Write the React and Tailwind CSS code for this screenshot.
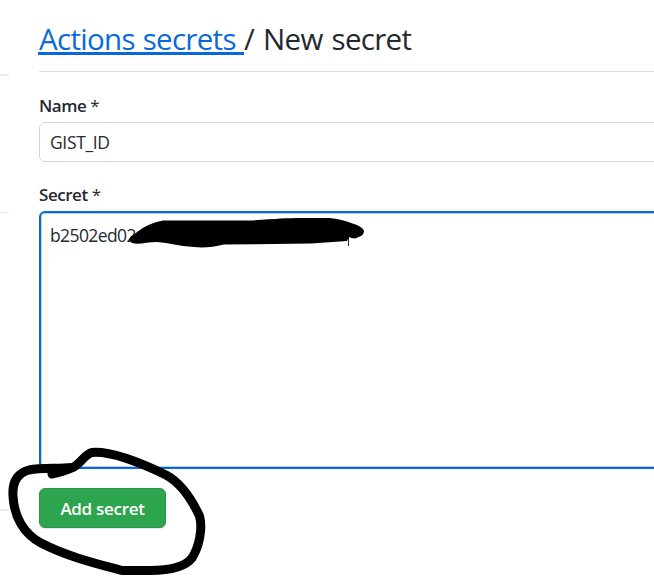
function Sidebar() {
  return (
    <aside className="flex w-[9px] shrink-0 flex-col">
      <div className="mt-[74px] h-[2px] bg-[#e9ecef]" />
      <div className="mt-[136px] h-px bg-[#e4e8ec]" />
      <div className="mt-[296px] h-[2px] bg-[#e9ecef]" />
    </aside>
  );
}

function Label({ children }) {
  return (
    <label className="block h-6 whitespace-pre text-[17px] leading-6 font-semibold tracking-[-0.45px] text-[#24292f]">
      {children} <span className="font-normal">*</span>
    </label>
  );
}

function Annotations() {
  return (
    <svg className="pointer-events-none absolute inset-0" width="654" height="576" viewBox="0 0 654 576">
      <path
        d="M129.500 239C130 236 134 235 137 232C145 226 151 223 163 220.5H250C275 219 286 218 302 218H329C342 219 352 223 359 226C364 229 365 231 363 234C362 237 358 236 357 238C354 239 351 238 349 237L347 241L311 243.5L224 244.5C213 247 204 248 194 247C178 246 170 243 157 242C147 242 139 245 132 243Q129 241 129.500 239Z"
        fill="#000"
      />
      <path
        d="M52 474C58 473 65 471 73 467.500C81 463 85 454 92 452.500C110 451 139 462 166 475C181 483 192 500 199.500 516C203 529 199 547 192 558C185 567 169 570.500 150 570.500H122C94 563 66 556 41 543C24 534 14 517 13 496C12 481 18 473 29 470C42 467.500 57 469 72 467.500"
        fill="none"
        stroke="#000"
        strokeWidth="9"
        strokeLinecap="round"
        strokeLinejoin="round"
      />
    </svg>
  );
}

export default function App() {
  return (
    <div className="relative flex h-[576px] w-[654px] overflow-hidden bg-white font-['Open_Sans',sans-serif] text-[#24292f]">
      <Sidebar />
      <main className="ml-[30px] flex min-w-0 flex-1 flex-col">
        <h1 className="h-[72px] shrink-0 border-b border-[#d8dee4] pt-[19px] text-[29.5px] leading-10 font-normal whitespace-pre">
          <a className="-ml-px inline-block h-9 w-[206px] border-b-[3px] border-[#0969da] pl-px tracking-[-0.7px] text-[#0969da] [word-spacing:1px]">Actions secrets </a>
          <span className="tracking-[-0.7px] [word-spacing:2px]">/ New secret</span>
        </h1>
        <div className="mt-[22px]">
          <Label>Name</Label>
          <div className="mt-1 h-10 w-[640px] rounded-md border border-[#d0d7de] px-2.5 text-[17.5px] leading-[38px]">
            <span className="tracking-[-0.35px]">GIST_ID</span>
          </div>
        </div>
        <div className="mt-[21px]">
          <Label>Secret</Label>
          <div className="mt-1 h-[258px] w-[640px] rounded-md border-2 border-[#0969da] px-[9px] pt-2.5 text-[17.5px] leading-6 shadow-[inset_0_0_0_1px_#b6d4f5]">
            <div className="flex h-6">
              <span className="w-[298px] tracking-[-0.6px]">b2502ed02c</span>
              <span className="mt-px h-[22px] w-px bg-[#24292f]" />
            </div>
          </div>
        </div>
        <button className="mt-[19px] h-10 w-[127px] shrink-0 rounded-md border border-[#2b964a] bg-[#2da44e] pt-0.5 text-[17px] leading-6 font-semibold tracking-[-0.3px] text-white shadow-[0_1px_0_rgba(27,31,36,0.1)]">
          Add secret
        </button>
      </main>
      <Annotations />
    </div>
  );
}
